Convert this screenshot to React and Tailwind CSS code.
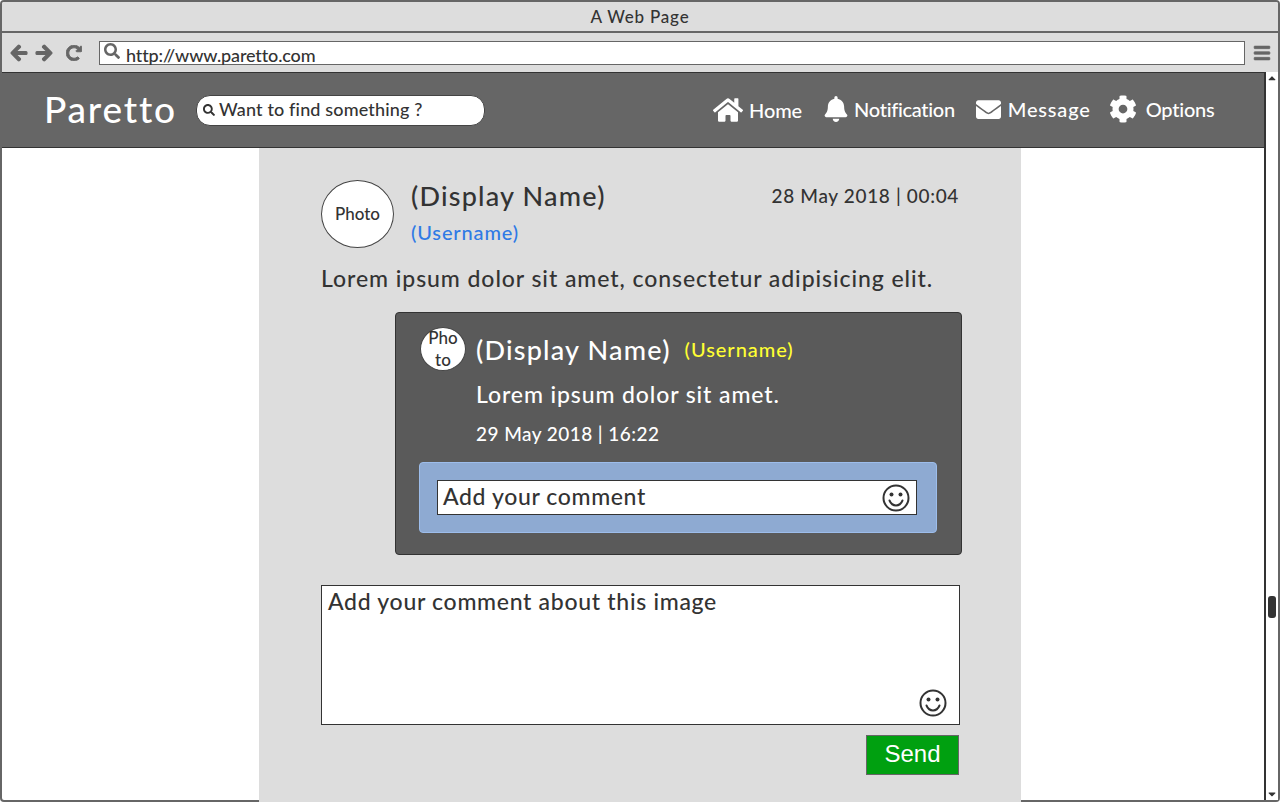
import React from "react";
import { FaHome, FaBell, FaEnvelope, FaCog, FaSearch, FaArrowLeft, FaArrowRight, FaRedoAlt, FaBars, FaCaretUp, FaCaretDown } from "react-icons/fa";

function Smiley({ className }) {
  return (
    <svg viewBox="0 0 28 28" className={className} fill="none" stroke="#333" strokeWidth="2">
      <circle cx="14" cy="14" r="12.5" />
      <circle cx="9.5" cy="10.500" r="2" fill="#333" stroke="none" />
      <circle cx="18.5" cy="10.500" r="2" fill="#333" stroke="none" />
      <path d="M7.5 16.5c1.5 3.5 3.8 5 6.5 5s5-1.500 6.500-5" strokeLinecap="round" />
    </svg>
  );
}

function NavItem({ icon, label, className, textClass }) {
  return (
    <div className={`flex items-center ${className}`}>
      {icon}
      <span className={`text-[20px] leading-none text-white ${textClass}`}>{label}</span>
    </div>
  );
}

export default function App() {
  return (
    <div className="relative flex h-[802px] w-[1280px] flex-col rounded-[4px] border-2 border-[#666] bg-white font-['Lato','Noto_Sans',sans-serif] font-medium text-[#333]">
      <div className="flex h-[31px] shrink-0 items-center justify-center rounded-t-[2px] border-b-2 border-[#666] bg-[#ddd] text-[17px] tracking-[0.8px]">
        A Web Page
      </div>
      <div className="flex h-[39px] shrink-0 items-center bg-[#ddd] pl-[8px] pr-[7px] text-[#666]">
        <FaArrowLeft className="mr-[7px] h-[18px] w-[18px] stroke-[40px]" />
        <FaArrowRight className="mr-[13px] h-[18px] w-[18px] stroke-[40px]" />
        <FaRedoAlt className="mr-[17px] h-[16px] w-[16px] stroke-[30px]" />
        <div className="flex h-[24px] w-[1146px] items-center border border-[#666] bg-white pl-[4px]">
          <FaSearch className="h-[16px] w-[16px] -translate-y-[2px] text-[#666]" />
          <span className="ml-[6px] translate-y-[2px] text-[18px] leading-none tracking-[-0.13px] text-[#333]">http://www.paretto.com</span>
        </div>
        <FaBars className="ml-[8px] h-[18px] w-[18px] stroke-[20px]" />
      </div>
      <div className="flex min-h-0 flex-1">
        <div className="min-w-0 flex-1">
          <header className="flex h-[76px] items-center border-y border-[#333] bg-[#666]">
            <div className="ml-[42px] w-[152px] pb-[4px] text-[37px] leading-none tracking-[1.8px] text-white">Paretto</div>
            <div className="flex h-[31px] w-[289px] items-center rounded-[14px] border border-[#444] bg-white pl-[6px]">
              <FaSearch className="h-[12px] w-[12px] text-[#333]" />
              <span className="ml-[4px] -translate-y-[1px] text-[18px] leading-none tracking-[0.15px] text-[#333]">Want to find something ?</span>
            </div>
            <NavItem className="ml-[228px]" textClass="tracking-[-0.1px]" label="Home" icon={<FaHome className="mr-[6px] h-[30px] w-[30px] text-white" />} />
            <NavItem className="ml-[21px] -translate-y-[1px]" textClass="tracking-[-0.3px]" label="Notification" icon={<FaBell className="mr-[5px] h-[26px] w-[26px] text-white" />} />
            <NavItem className="ml-[21px] -translate-y-[1px]" textClass="tracking-[0.8px]" label="Message" icon={<FaEnvelope className="mr-[7px] h-[25px] w-[25px] text-white" />} />
            <NavItem className="ml-[18px] -translate-y-[1px]" textClass="tracking-[-0.2px]" label="Options" icon={<FaCog className="mr-[9px] h-[28px] w-[28px] text-white" />} />
          </header>
          <main className="relative ml-[257px] flex h-[654px] w-[762px] flex-col bg-[#ddd] pl-[62px] pr-[61px] pt-[32px]">
            <div className="flex">
              <div className="flex h-[68px] w-[73px] shrink-0 items-center justify-center rounded-[50%] border border-[#444] bg-white pb-[1px] text-[17px]">Photo</div>
              <div className="ml-[17px] flex-1 -translate-y-[2px]">
                <div className="flex items-center justify-between">
                  <span className="text-[27px] leading-[36px] tracking-[1.2px]">(Display Name)</span>
                  <span className="mr-[1px] text-[19px] tracking-[0.65px]">28 May 2018 | 00:04</span>
                </div>
                <div className="mt-[6px] text-[20px] leading-[24px] tracking-[0.85px] text-[#2f7ae5]">(Username)</div>
              </div>
            </div>
            <p className="mt-[15px] text-[23px] leading-[30px] tracking-[0.93px]">Lorem ipsum dolor sit amet, consectetur adipisicing elit.</p>
            <section className="ml-[74px] mr-[-2px] mt-[19px] h-[243px] rounded-[4px] border border-[#333] bg-[#5a5a5a] pl-[23px] pr-[24px] pt-[14px] text-white">
              <div className="ml-[1px] flex items-center">
                <div className="flex h-[44px] w-[46px] shrink-0 items-center justify-center rounded-[50%] border border-[#444] bg-white text-center text-[17px] leading-[22px] text-[#333]">
                  <span className="w-[30px] break-all">Photo</span>
                </div>
                <span className="ml-[10px] text-[27px] leading-none tracking-[1.2px]">(Display Name)</span>
                <span className="ml-[14px] text-[20px] leading-none tracking-[0.95px] text-[#ffff33]">(Username)</span>
              </div>
              <div className="ml-[57px] mt-[8px] text-[23px] leading-[30px] tracking-[0.89px]">Lorem ipsum dolor sit amet.</div>
              <div className="ml-[57px] mt-[13px] text-[19px] leading-[24px] tracking-[0.44px]">29 May 2018 | 16:22</div>
              <div className="mt-[16px] flex h-[71px] items-center rounded-[4px] border border-[#9dbdeb] bg-[#8eaad2] pl-[17px]">
                <div className="flex h-[35px] w-[480px] items-center justify-between border border-[#333] bg-white pl-[5px] pr-[6px] text-[23px] tracking-[0.62px] text-[#333]">
                  <span className="-translate-y-[1px]">Add your comment</span>
                  <Smiley className="h-[28px] w-[28px]" />
                </div>
              </div>
            </section>
            <div className="relative mt-[30px] h-[140px] border border-[#333] bg-white pl-[6px] text-[23px] leading-[30px] tracking-[0.7px]">
              Add your comment about this image
              <Smiley className="absolute bottom-[7px] right-[12px] h-[28px] w-[28px]" />
            </div>
            <div className="mt-[10px] flex justify-end pr-[1px]">
              <button className="flex h-[40px] w-[93px] items-center justify-center border border-[#666] bg-[#00a010] pb-[2px] font-['Liberation_Sans',sans-serif] text-[24px] text-white">Send</button>
            </div>
          </main>
        </div>
        <div className="relative flex w-[14px] shrink-0 flex-col items-center justify-between border-l-2 border-[#333] bg-white">
          <FaCaretUp className="h-[12px] w-[12px] text-[#333]" />
          <div className="absolute left-[2px] top-[524px] h-[22px] w-[8px] rounded-[3px] bg-[#333]" />
          <FaCaretDown className="h-[12px] w-[12px] text-[#333]" />
        </div>
      </div>
    </div>
  );
}
